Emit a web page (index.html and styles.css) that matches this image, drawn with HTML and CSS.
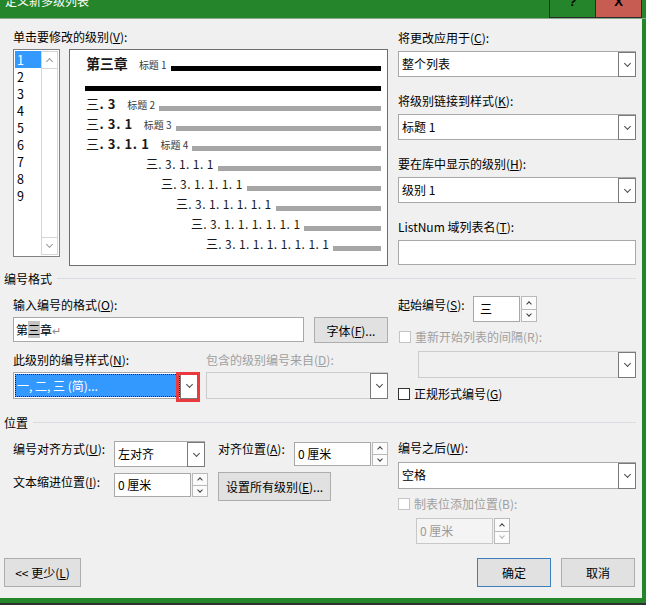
FILE: index.html
```html
<!DOCTYPE html>
<html lang="zh-CN">
<head>
    <meta charset="UTF-8">
    <title>定义新多级列表</title>
    <link rel="stylesheet" href="styles.css">
</head>
<body>
<div class="window">
    <div class="titlebar">
        <span class="title">定义新多级列表</span>
        <div class="capbtns">
            <span class="cap help">?</span>
            <span class="cap close">X</span>
        </div>
    </div>

    <div class="client">
        <!-- levels + preview / link options -->
        <div class="sec top">
            <div class="col">
                <div class="lbl">单击要修改的级别(<u>V</u>):</div>
                <div class="levels">
                    <div class="listbox">
                        <ul class="items">
                            <li class="sel">1</li>
                            <li>2</li>
                            <li>3</li>
                            <li>4</li>
                            <li>5</li>
                            <li>6</li>
                            <li>7</li>
                            <li>8</li>
                            <li>9</li>
                        </ul>
                        <div class="vscroll">
                            <span class="sb up"></span>
                            <span class="sb down"></span>
                        </div>
                    </div>
                    <div class="preview">
                        <div class="pv l1"><span class="num">第三章</span><span class="tag">标题 1</span><span class="bar black"></span></div>
                        <div class="rule"></div>
                        <div class="pv l2"><span class="num">三<b>. 3</b></span><span class="tag">标题 2</span><span class="bar"></span></div>
                        <div class="pv l2"><span class="num">三<b>. 3. 1</b></span><span class="tag">标题 3</span><span class="bar"></span></div>
                        <div class="pv l2"><span class="num">三<b>. 3. 1. 1</b></span><span class="tag">标题 4</span><span class="bar"></span></div>
                        <div class="pv lx i5"><span class="num">三. 3. 1. 1. 1</span><span class="bar"></span></div>
                        <div class="pv lx i6"><span class="num">三. 3. 1. 1. 1. 1</span><span class="bar"></span></div>
                        <div class="pv lx i7"><span class="num">三. 3. 1. 1. 1. 1. 1</span><span class="bar"></span></div>
                        <div class="pv lx i8"><span class="num">三. 3. 1. 1. 1. 1. 1. 1</span><span class="bar"></span></div>
                        <div class="pv lx i9"><span class="num">三. 3. 1. 1. 1. 1. 1. 1. 1</span><span class="bar"></span></div>
                    </div>
                </div>
            </div>

            <div class="col right">
                <div class="field">
                    <div class="lbl">将更改应用于(<u>C</u>):</div>
                    <div class="combo"><span class="val">整个列表</span><span class="dd"></span></div>
                </div>
                <div class="field">
                    <div class="lbl">将级别链接到样式(<u>K</u>):</div>
                    <div class="combo"><span class="val">标题 1</span><span class="dd"></span></div>
                </div>
                <div class="field">
                    <div class="lbl">要在库中显示的级别(<u>H</u>):</div>
                    <div class="combo"><span class="val">级别 1</span><span class="dd"></span></div>
                </div>
                <div class="field">
                    <div class="lbl">ListNum 域列表名(<u>T</u>):</div>
                    <div class="edit"></div>
                </div>
            </div>
        </div>

        <div class="group"><span>编号格式</span></div>

        <div class="sec fmt">
            <div class="col">
                <div class="lbl gap-top">输入编号的格式(<u>O</u>):</div>
                <div class="fmt-row">
                    <div class="edit fmt-edit">第<span class="hl">三</span>章<span class="ret">↵</span></div>
                    <button class="btn font-btn">字体(<u>F</u>)...</button>
                </div>
                <div class="pair">
                    <div>
                        <div class="lbl">此级别的编号样式(<u>N</u>):</div>
                        <div class="combo focus">
                            <span class="val">一, 二, 三 (简)...</span><span class="dd"></span>
                            <span class="mark"></span>
                        </div>
                    </div>
                    <div>
                        <div class="lbl off">包含的级别编号来自(<u>D</u>):</div>
                        <div class="combo off"><span class="val"></span><span class="dd"></span></div>
                    </div>
                </div>
            </div>

            <div class="col right fmt-right">
                <div class="start-row">
                    <span class="lbl">起始编号(<u>S</u>):</span>
                    <div class="spin start">
                        <span class="val">三</span>
                        <span class="arrows"><span class="sb up"></span><span class="sb down"></span></span>
                    </div>
                </div>
                <div class="chk off restart-chk"><span class="box"></span><span>重新开始列表的间隔(R):</span></div>
                <div class="combo off restart"><span class="val"></span><span class="dd"></span></div>
                <div class="chk legal"><span class="box"></span><span>正规形式编号(<u>G</u>)</span></div>
            </div>
        </div>

        <div class="group pos-head"><span>位置</span></div>

        <div class="sec pos">
            <div class="col pos-grid">
                <div class="lbl">编号对齐方式(<u>U</u>):</div>
                <div class="combo align"><span class="val">左对齐</span><span class="dd"></span></div>
                <div class="lbl">对齐位置(<u>A</u>):</div>
                <div class="spin at">
                    <span class="val">0 厘米</span>
                    <span class="arrows"><span class="sb up"></span><span class="sb down"></span></span>
                </div>
                <div class="lbl indent-lbl">文本缩进位置(<u>I</u>):</div>
                <div class="spin indent">
                    <span class="val">0 厘米</span>
                    <span class="arrows"><span class="sb up"></span><span class="sb down"></span></span>
                </div>
                <button class="btn all-btn">设置所有级别(<u>E</u>)...</button>
            </div>

            <div class="col right pos-right">
                <div class="lbl">编号之后(<u>W</u>):</div>
                <div class="combo after"><span class="val">空格</span><span class="dd"></span></div>
                <div class="chk off tab-chk"><span class="box"></span><span>制表位添加位置(B):</span></div>
                <div class="spin off tabpos">
                    <span class="val">0 厘米</span>
                    <span class="arrows"><span class="sb up"></span><span class="sb down"></span></span>
                </div>
            </div>
        </div>

        <div class="footer">
            <button class="btn less">&lt;&lt; 更少(<u>L</u>)</button>
            <div class="actions">
                <button class="btn ok">确定</button>
                <button class="btn cancel">取消</button>
            </div>
        </div>
    </div>
</div>
</body>
</html>
```

FILE: styles.css
```css
* {
    box-sizing: border-box;
}
html,
body {
    margin: 0;
    padding: 0;
}
body {
    width: 646px;
    height: 605px;
    overflow: hidden;
    background-color: #25852a;
    font-family: "Noto Sans CJK SC", "Microsoft YaHei", sans-serif;
    font-size: 12px;
    color: #000;
}
u {
    text-decoration: underline;
    text-underline-offset: 1px;
}

.window {
    width: 646px;
    height: 605px;
    border-bottom: 2px solid #2f2f2f;
}

/* title bar */
.titlebar {
    height: 19px;
    display: flex;
    justify-content: space-between;
    overflow: hidden;
    padding-right: 4px;
    border-bottom: 1px solid #8aa98c;
}
.title {
    color: #fff;
    line-height: 16px;
    margin: -7px 0 0 5px;
}
.capbtns {
    display: flex;
}
.cap {
    width: 47px;
    height: 18px;
    border: 1px solid #2b2b2b;
    border-top: none;
    text-align: center;
    font-family: "Liberation Sans", sans-serif;
    font-size: 13px;
    font-weight: bold;
    line-height: 4px;
    overflow: hidden;
}
.help {
    background-color: #25852a;
}
.close {
    width: 46px;
    border-left: none;
    background-color: #c75c52;
}

/* dialog body */
.client {
    width: 642px;
    height: 579px;
    background-color: #f0f0f0;
    padding: 0 6px 0 4px;
}
.sec {
    display: grid;
    grid-template-columns: 375px 238px;
    column-gap: 10px;
    align-items: start;
    padding-left: 9px;
}
.lbl {
    line-height: 16px;
    white-space: nowrap;
}
.off {
    color: #a0a0a0;
}

.top {
    padding-top: 10px;
}
.levels {
    display: flex;
    gap: 9px;
    margin-top: 4px;
}

/* level list */
.listbox {
    width: 47px;
    height: 208px;
    border: 1px solid #828282;
    background-color: #fff;
    padding: 1px;
    display: flex;
}
.items {
    list-style: none;
    margin: 0;
    padding: 0;
    flex: 1;
}
.items li {
    height: 17px;
    line-height: 17px;
    padding-left: 2px;
    font-size: 12.5px;
}
.items li.sel {
    background-color: #3399ff;
    color: #fff;
}
.vscroll {
    width: 17px;
    border: 1px solid #d6d6d6;
    display: flex;
    flex-direction: column;
    justify-content: space-between;
}
.vscroll .sb {
    height: 17px;
    display: flex;
    align-items: center;
    justify-content: center;
}
.vscroll .up {
    border-bottom: 1px solid #d6d6d6;
}
.vscroll .down {
    border-top: 1px solid #d6d6d6;
}
.sb::after {
    content: "";
    width: 4px;
    height: 4px;
    border-right: 1px solid #9a9a9a;
    border-bottom: 1px solid #9a9a9a;
}
.sb.up::after {
    transform: rotate(-135deg);
    margin-top: 3px;
}
.sb.down::after {
    transform: rotate(45deg);
    margin-top: -3px;
}

/* preview */
.preview {
    width: 320px;
    height: 217px;
    border: 1px solid #6e6e6e;
    background-color: #fff;
    padding: 3px 6px 0 16px;
}
.pv {
    display: flex;
    align-items: center;
    height: 20px;
    white-space: nowrap;
    color: #1a1a1a;
}
.pv .num {
    font-size: 12px;
}
.l1 .num {
    font-size: 14px;
    font-weight: bold;
}
.l2 .num {
    font-size: 13px;
    letter-spacing: 0.6px;
}
.lx .num {
    letter-spacing: 0.4px;
}
.tag {
    font-size: 10px;
    color: #3a3a3a;
    margin-left: 11px;
    margin-top: 2px;
}
.bar {
    flex: 1;
    height: 5px;
    margin: 11px 0 0 4px;
    background-color: #a6a6a6;
}
.bar.black {
    background-color: #000;
}
.rule {
    height: 5px;
    margin: 13px 0 2px -1px;
    background-color: #000;
}
.i5 { padding-left: 60px; }
.i6 { padding-left: 75px; }
.i7 { padding-left: 90px; }
.i8 { padding-left: 105px; }
.i9 { padding-left: 120px; }

/* controls */
.right {
    padding-top: 1px;
}
.field + .field {
    margin-top: 16px;
}
.field .combo,
.field .edit {
    margin-top: 5px;
}
.combo {
    position: relative;
    height: 26px;
    border: 1px solid #a8a8a8;
    background-color: #fff;
    display: flex;
}
.combo .val {
    flex: 1;
    line-height: 24px;
    padding-left: 3px;
    white-space: nowrap;
}
.dd {
    width: 18px;
    margin: 0 -1px -1px 0;
    border: 1px solid #7a7a7a;
    background-color: #fff;
    display: flex;
    align-items: center;
    justify-content: center;
}
.dd::after {
    content: "";
    width: 4px;
    height: 4px;
    border-right: 1.6px solid #4a4a4a;
    border-bottom: 1.6px solid #4a4a4a;
    transform: rotate(45deg);
    margin-top: -3px;
}
.combo.off {
    background-color: #f0f0f0;
    border-color: #cccccc;
}
.edit {
    height: 25px;
    border: 1px solid #a8a8a8;
    background-color: #fff;
}

.btn {
    font-family: inherit;
    font-size: 12px;
    color: #000;
    background-color: #e1e1e1;
    border: 1px solid #adadad;
    padding: 0;
    white-space: nowrap;
}

/* number format */
.group {
    display: flex;
    align-items: center;
    line-height: 16px;
    margin-top: 5px;
}
.group::after {
    content: "";
    flex: 1;
    height: 1px;
    margin: -2px 0 0 5px;
    background-color: #d9dde2;
}
.gap-top {
    margin-top: 10px;
}
.fmt-row {
    display: flex;
    gap: 10px;
    margin-top: 4px;
}
.fmt-edit {
    width: 291px;
    line-height: 23px;
    padding-left: 2px;
}
.hl {
    background-color: #c4c4c4;
}
.ret {
    font-size: 11px;
    color: #8a8a8a;
}
.font-btn {
    width: 74px;
    height: 26px;
}
.pair {
    display: grid;
    grid-template-columns: 185px 182px;
    column-gap: 8px;
    margin-top: 9px;
}
.pair .combo {
    height: 27px;
    margin-top: 4px;
}
.combo.focus .val {
    margin: 1px 0 1px 1px;
    border: 1px dotted #1a1a1a;
    background-color: #3399ff;
    color: #fff;
    line-height: 21px;
    padding-left: 1px;
}
.mark {
    position: absolute;
    left: 162px;
    top: -1px;
    width: 24px;
    height: 30px;
    border: 3px solid #ea3a3d;
}

.fmt-right {
    padding-top: 9px;
}
.start-row {
    display: flex;
    align-items: flex-start;
}
.start-row .lbl {
    width: 75px;
    margin-top: 1px;
}
.spin {
    display: flex;
    height: 24px;
}
.spin .val {
    flex: 1;
    border: 1px solid #a8a8a8;
    background-color: #fff;
    line-height: 22px;
    padding-left: 3px;
    white-space: nowrap;
}
.arrows {
    width: 17px;
    display: flex;
    flex-direction: column;
}
.arrows .sb {
    flex: 1;
    border: 1px solid #b9b9b9;
    background-color: #fbfbfb;
    display: flex;
    align-items: center;
    justify-content: center;
    margin-left: 1px;
}
.arrows .sb + .sb {
    margin-top: -1px;
}
.arrows .sb::after {
    width: 3px;
    height: 3px;
    border-color: #3c3c3c;
}
.arrows .up::after {
    margin-top: 2px;
}
.arrows .down::after {
    margin-top: -2px;
}
.spin.start {
    width: 64px;
    height: 26px;
}
.spin.start .val {
    padding-left: 6px;
    line-height: 24px;
}

.chk {
    display: flex;
    align-items: center;
    gap: 4px;
    line-height: 16px;
    white-space: nowrap;
}
.box {
    width: 12px;
    height: 12px;
    border: 1px solid #333;
    background-color: #fff;
}
.chk.off .box {
    border-color: #c4c4c4;
}
.restart-chk {
    margin-top: 7px;
    padding-left: 1px;
}
.combo.restart {
    height: 27px;
    margin: 6px 0 0 20px;
}
.legal {
    margin-top: 8px;
}

/* position */
.group.pos-head {
    margin-top: 13px;
}
.pos-grid {
    display: grid;
    grid-template-columns: 101px 104px 76px 94px;
    grid-template-rows: 26px 29px;
    row-gap: 5px;
    padding-top: 10px;
}
.combo.align {
    width: 91px;
}
.spin.at {
    margin-top: 1px;
}
.indent-lbl {
    margin-top: 2px;
}
.spin.indent {
    width: 94px;
    margin-top: 1px;
}
.all-btn {
    grid-column: 3 / span 2;
    width: 113px;
    height: 29px;
}
.pos-right {
    padding-top: 9px;
}
.combo.after {
    height: 27px;
    margin-top: 6px;
}
.tab-chk {
    margin-top: 7px;
}
.spin.tabpos {
    width: 94px;
    height: 26px;
    margin: 6px 0 0 18px;
}
.spin.off .val {
    background-color: #f4f4f4;
    border-color: #c8c8c8;
    color: #9a9a9a;
    line-height: 24px;
}
.spin.off .down::after {
    border-color: #b0b0b0;
}

/* buttons */
.footer {
    display: flex;
    justify-content: space-between;
    margin-top: 14px;
}
.less {
    width: 77px;
    height: 29px;
}
.actions {
    display: flex;
    gap: 10px;
    margin-right: 1px;
}
.ok,
.cancel {
    width: 74px;
    height: 29px;
}
.ok {
    border-color: #3d7ebf;
}
```
